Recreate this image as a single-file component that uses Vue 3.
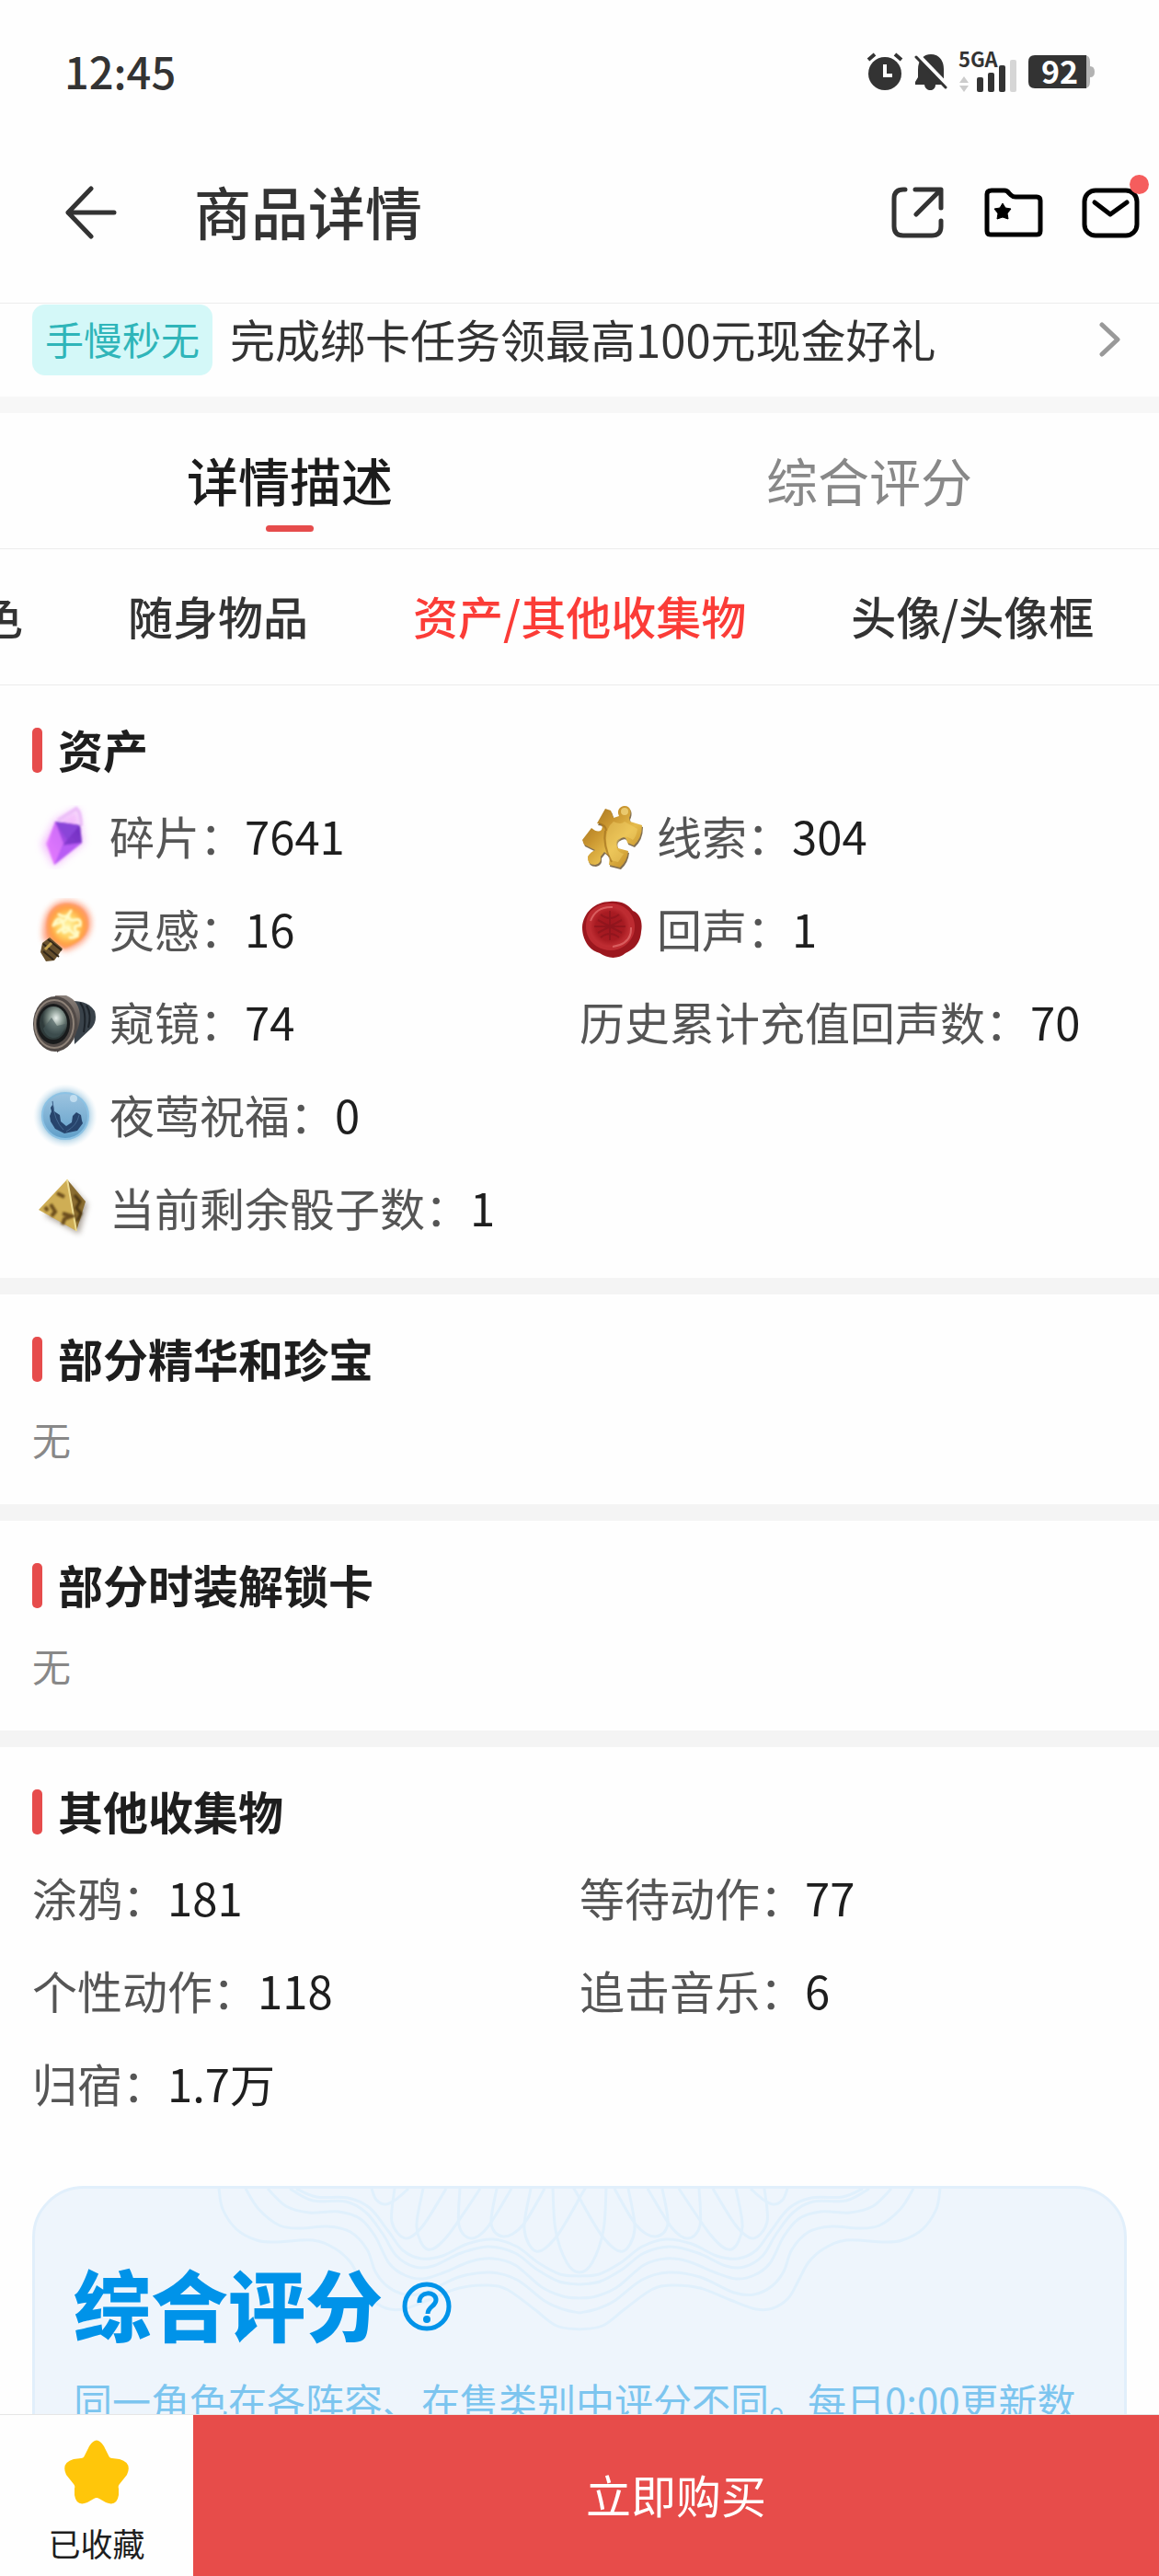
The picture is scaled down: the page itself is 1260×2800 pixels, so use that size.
<script setup>
const categories = [
  { label: '色', active: false },
  { label: '随身物品', active: false },
  { label: '资产/其他收集物', active: true },
  { label: '头像/头像框', active: false },
]

const assets = [
  { icon: 'shard', label: '碎片', value: '7641' },
  { icon: 'puzzle', label: '线索', value: '304' },
  { icon: 'bulb', label: '灵感', value: '16' },
  { icon: 'seal', label: '回声', value: '1' },
  { icon: 'lens', label: '窥镜', value: '74' },
  { icon: '', label: '历史累计充值回声数', value: '70' },
  { icon: 'orb', label: '夜莺祝福', value: '0', wide: true },
  { icon: 'dice', label: '当前剩余骰子数', value: '1', wide: true },
]

const collection = [
  { label: '涂鸦', value: '181' },
  { label: '等待动作', value: '77' },
  { label: '个性动作', value: '118' },
  { label: '追击音乐', value: '6' },
  { label: '归宿', value: '1.7万' },
]

// Left half of the guilloche ornament; the right half is its mirror.
const waves = [
  [[202, 0], [206, 22], [221, 44], [243, 56], [263, 58], [304, 56], [328, 65], [345, 80], [356, 100], [367, 119], [384, 130], [402, 131], [430, 121], [463, 108], [495, 105], [516, 110], [545, 131], [569, 149], [594, 153]],
  [[231, 0], [245, 22], [268, 40], [291, 43], [320, 41], [345, 47], [363, 66], [372, 90], [385, 106], [404, 115], [426, 113], [463, 96], [497, 91], [526, 99], [556, 122], [576, 131], [594, 135]],
  [[255, 0], [275, 19], [300, 26], [332, 25], [356, 33], [372, 52], [387, 81], [404, 94], [424, 98], [447, 91], [476, 79], [500, 76], [524, 83], [553, 107], [576, 117], [594, 119]],
  [[279, 0], [304, 13], [340, 14], [362, 26], [380, 49], [395, 73], [415, 85], [435, 84], [465, 70], [495, 63], [524, 70], [548, 88], [572, 101], [594, 104]],
  [[286, 0], [308, 9], [342, 10], [366, 21], [386, 46], [402, 67], [422, 76], [445, 73], [472, 60], [500, 55], [526, 63], [550, 81], [573, 93], [594, 95]],
]
const petals = [
  [[368, 0], [373, 12], [383, 17], [394, 12], [408, 0]],
  [[393, 0], [390, 36], [405, 54], [424, 40], [449, 0]],
  [[424, 0], [417, 42], [429, 66], [450, 52], [486, 0]],
  [[464, 0], [463, 40], [476, 54], [494, 42], [520, 0]],
  [[504, 0], [498, 38], [511, 52], [532, 40], [556, 0]],
  [[541, 0], [534, 44], [547, 68], [569, 52], [597, 5], [600, 0]],
  [[562, 0], [565, 40], [578, 76], [590, 89], [602, 84], [614, 60], [621, 0]],
]

function smooth(points) {
  let d = `M${points[0][0]} ${points[0][1]}`
  for (let i = 0; i < points.length - 1; i++) {
    const a = points[Math.max(i - 1, 0)]
    const b = points[i]
    const c = points[i + 1]
    const e = points[Math.min(i + 2, points.length - 1)]
    d += `C${b[0] + (c[0] - a[0]) / 6} ${b[1] + (c[1] - a[1]) / 6} ${c[0] - (e[0] - b[0]) / 6} ${c[1] - (e[1] - b[1]) / 6} ${c[0]} ${c[1]}`
  }
  return d
}
const wavePaths = waves.map(smooth)
const petalPaths = petals.slice(0, -1).map(smooth)
const centerPetal = smooth([[565, 0], [568, 45], [580, 80], [594, 91], [608, 80], [620, 45], [623, 0]])
</script>

<template>
  <div class="page" lang="zh-CN">
    <div class="status">
      <span class="clock">12:45</span>
      <div class="status-icons">
        <svg width="40" height="42" viewBox="0 0 40 42">
          <circle cx="20" cy="23" r="18" fill="#333" />
          <path d="M2 8l7-6M31 2l7 6" stroke="#333" stroke-width="4" fill="none" />
          <path d="M20 13v12h8" stroke="#fff" stroke-width="4" fill="none" />
        </svg>
        <svg width="36" height="42" viewBox="0 0 36 42">
          <path d="M4 19C4 8 10 2 18 2s14 6 14 16v11l3 6H23c0 8-11 8-12 0H1v-3l3-5z" fill="#333" />
          <path d="M3 2l33 34" stroke="#fefefe" stroke-width="5" />
          <path d="M2 5l32 33" stroke="#333" stroke-width="3" stroke-linecap="round" />
        </svg>
        <div class="signal">
          <svg width="64" height="44" viewBox="0 0 64 44">
            <path d="M1 34l5-7 5 7zM1 37h10l-5 7z" fill="#ccc" />
            <rect x="20" y="28" width="7" height="16" rx="2" fill="#333" />
            <rect x="32" y="23" width="7" height="21" rx="2" fill="#333" />
            <rect x="44" y="15" width="7" height="29" rx="2" fill="#333" />
            <rect x="56" y="9" width="7" height="35" rx="2" fill="#d6d6d6" />
          </svg>
          <span class="network">5GA</span>
        </div>
        <div class="battery">
          <svg width="72" height="36" viewBox="0 0 72 36">
            <path d="M58 0h3q6 0 6 7v5q5 0 5 6t-5 6v5q0 7-6 7h-3z" fill="#b3b3b3" />
            <path d="M7 0h56v36H7q-7 0-7-7V7q0-7 7-7z" fill="#333" />
          </svg>
          <span class="charge">92</span>
        </div>
      </div>
    </div>

    <header class="appbar">
      <button class="icon-btn back" aria-label="返回">
        <svg width="58" height="60" viewBox="0 0 58 60" fill="none" stroke="#333" stroke-width="5" stroke-linecap="round" stroke-linejoin="round">
          <path d="M54 30H4M29 4L4 30l25 26" />
        </svg>
      </button>
      <h1>商品详情</h1>
      <div class="actions">
        <button class="icon-btn" aria-label="分享">
          <svg width="64" height="58" viewBox="0 0 64 58" fill="none" stroke="#333" stroke-width="5" stroke-linecap="round" stroke-linejoin="round">
            <path d="M19 4h-2Q7 4 7 14v30q0 10 10 10h31q10 0 10-10v-6" />
            <path d="M30 4h28v20M57 5L31 31" />
          </svg>
        </button>
        <button class="icon-btn" aria-label="收藏夹">
          <svg width="64" height="58" viewBox="0 0 64 58">
            <path d="M8 5h14q3 0 5 3l2 2q2 2 5 2h23q4 0 4 4v33q0 4-4 4H7q-4 0-4-4V9q0-4 5-4z" fill="none" stroke="#000" stroke-width="5" stroke-linejoin="round" />
            <path d="M20 19l3 5 6 1-4 5 1 6-6-2-6 2 1-6-4-5 6-1z" fill="#000" stroke="#000" stroke-width="1" stroke-linejoin="round" />
          </svg>
        </button>
        <button class="icon-btn" aria-label="消息">
          <svg width="64" height="58" viewBox="0 0 64 58" fill="none" stroke="#000" stroke-width="5" stroke-linecap="round" stroke-linejoin="round">
            <rect x="4" y="5" width="57" height="49" rx="12" />
            <path d="M15 18l17 13 18-13" />
          </svg>
          <span class="dot"></span>
        </button>
      </div>
    </header>

    <main class="content">
      <a class="promo" href="#">
        <span class="badge">手慢秒无</span>
        <span class="promo-text">完成绑卡任务领最高100元现金好礼</span>
        <svg width="24" height="40" viewBox="0 0 24 40" fill="none" stroke="#999" stroke-width="5" stroke-linecap="round" stroke-linejoin="round">
          <path d="M3 3l17 16L3 35" />
        </svg>
      </a>

      <div class="tabs">
        <button class="tab current">详情描述</button>
        <button class="tab">综合评分</button>
      </div>

      <nav class="categories">
        <a v-for="c in categories" :key="c.label" href="#" :class="{ active: c.active }">{{ c.label }}</a>
      </nav>

      <section>
        <h2>资产</h2>
        <ul class="grid">
          <li v-for="a in assets" :key="a.label" :class="{ wide: a.wide }">
            <svg v-if="a.icon" class="item-icon" width="70" height="70" viewBox="0 0 70 70">
              <g v-if="a.icon === 'shard'">
                <defs>
                  <linearGradient id="shard" x1="0" y1="1" x2="1" y2="0">
                    <stop offset="0" stop-color="#f07cff" />
                    <stop offset=".5" stop-color="#a44ce6" />
                    <stop offset="1" stop-color="#6a2cc0" />
                  </linearGradient>
                  <filter id="glow" x="-40%" y="-40%" width="180%" height="180%"><feGaussianBlur stdDeviation="4" /></filter>
                  <filter id="soft"><feGaussianBlur stdDeviation="1" /></filter>
                </defs>
                <path d="M25 16L50 3l6 38-32 26-14-24z" fill="#f0a8fb" opacity=".75" filter="url(#glow)" />
                <g filter="url(#soft)">
                  <path d="M28 17L48 4q5 4 5 19" fill="none" stroke="#ecc0f8" stroke-width="4" />
                  <path d="M25 18l27 4 2 19-30 24-7-22z" fill="url(#shard)" />
                  <path d="M25 18l27 4-14 16z" fill="#8a45d8" />
                  <path d="M52 22L38 38l-5 6 21-3z" fill="#7131bf" opacity=".6" />
                  <path d="M25 18l9 24-10 23-9-23z" fill="#e27bff" opacity=".75" />
                  <path d="M54 41L33 44l-9 21z" fill="#b85cf5" />
                </g>
              </g>
              <g v-else-if="a.icon === 'puzzle'">
                <defs>
                  <linearGradient id="gold" x1="0" y1="0" x2="1" y2="1">
                    <stop offset="0" stop-color="#94661c" />
                    <stop offset=".35" stop-color="#c8942f" />
                    <stop offset=".6" stop-color="#e6bc4c" />
                    <stop offset="1" stop-color="#b57c1b" />
                  </linearGradient>
                </defs>
                <path d="M19 20L28 4l6 2 3 8 6-2C40 6 44 1 49 1c7 0 8 7 5 13l1 4 13 4q0 14-9 22l-7-3q-1-8-7-5-8 3-3 11l11 3q-1 11-9 18l-12-3 1-9-6-5-4 5q1 8-6 9-9 0-8-9 3-5 8-7L5 43l-2-5 10-13q7 6 11 2 3-7-5-7z" fill="#4d3209" opacity=".7" transform="translate(1 2)" />
                <path d="M19 20L28 4l6 2 3 8 6-2C40 6 44 1 49 1c7 0 8 7 5 13l1 4 13 4q0 14-9 22l-7-3q-1-8-7-5-8 3-3 11l11 3q-1 11-9 18l-12-3 1-9-6-5-4 5q1 8-6 9-9 0-8-9 3-5 8-7L5 43l-2-5 10-13q7 6 11 2 3-7-5-7z" fill="url(#gold)" />
                <path d="M37 18q8 4 12 0l14 8q-1 8-5 12-10-8-16 2-5 10 6 13l-6 9-8-2q-4-12-5-22 0-14 8-20z" fill="#f3d36b" opacity=".45" />
                <path d="M28 28q-3 16 7 34M21 20q8 2 8 8" fill="none" stroke="#9b6a1c" stroke-width="2" opacity=".6" />
                <circle cx="49" cy="7" r="4" fill="#f5dc86" opacity=".7" />
              </g>
              <g v-else-if="a.icon === 'bulb'">
                <defs>
                  <radialGradient id="bulb">
                    <stop offset="0" stop-color="#fff7a8" />
                    <stop offset=".5" stop-color="#ffd061" />
                    <stop offset=".8" stop-color="#ffa246" />
                    <stop offset="1" stop-color="#ff9c66" />
                  </radialGradient>
                  <filter id="halo" x="-30%" y="-30%" width="160%" height="160%"><feGaussianBlur stdDeviation="3" /></filter>
                  <filter id="haze"><feGaussianBlur stdDeviation="1" /></filter>
                </defs>
                <path d="M38 3c18 0 28 13 26 28S49 54 36 58L12 46C9 22 18 3 38 3z" fill="#ff8f68" opacity=".8" filter="url(#halo)" />
                <path d="M38 6c15 0 24 11 23 24S48 50 35 55L17 43C12 22 20 6 38 6z" fill="url(#bulb)" filter="url(#haze)" />
                <path d="M23 30q4-10 9-6t8-8q-2 10 6 8t6 6q-9-1-4 8t-8-4q-8 8-6-2t-11-2M29 18q9 6 13-4M41 43q8 1 9-6M28 37q5-5 12-5" fill="none" stroke="#fffbc6" stroke-width="3" stroke-linecap="round" filter="url(#haze)" />
                <path d="M11 49l8-6 14 12-4 6-5 7-9 1-6-10z" fill="#67502d" />
                <path d="M12 50l17 14M17 45l15 12M12 58l11 9" stroke="#322719" stroke-width="2" />
                <path d="M14 56l7-7" stroke="#c2a04d" stroke-width="3" />
              </g>
              <g v-else-if="a.icon === 'seal'">
                <defs>
                  <radialGradient id="wax">
                    <stop offset="0" stop-color="#a0161f" />
                    <stop offset=".7" stop-color="#a81b22" />
                    <stop offset="1" stop-color="#c02e33" />
                  </radialGradient>
                </defs>
                <path d="M33 4c12-1 20 3 25 10 8 3 11 12 9 23-1 14-10 20-17 23-8 7-20 6-28 0C10 57 3 45 3 32 4 16 17 4 33 4z" fill="#9b171e" />
                <path d="M32 6c15-1 27 9 28 24S48 57 34 57 7 47 7 31 17 7 32 6z" fill="#bd2b31" />
                <circle cx="33" cy="31" r="22" fill="url(#wax)" />
                <path d="M12 25Q18 9 36 10M56 32q1 18-20 21" fill="none" stroke="#e06a6a" stroke-width="2" opacity=".8" />
                <path d="M33 14v32M20 24l26 14M20 38l26-14M23 18q10 8 20 0M23 43q10-8 20 0M16 31h34" fill="none" stroke="#7d1119" stroke-width="2" opacity=".5" />
              </g>
              <g v-else-if="a.icon === 'lens'">
                <defs>
                  <radialGradient id="glass" cx=".6" cy=".35">
                    <stop offset="0" stop-color="#e8f0ec" />
                    <stop offset=".5" stop-color="#86968f" />
                    <stop offset="1" stop-color="#2f3b3b" />
                  </radialGradient>
                  <linearGradient id="tube" x1="0" y1="0" x2="0" y2="1">
                    <stop offset="0" stop-color="#8a807a" />
                    <stop offset="1" stop-color="#2e2a29" />
                  </linearGradient>
                </defs>
                <path d="M44 11q17 0 24 11 3 10-3 18L46 58z" fill="#39424a" />
                <path d="M52 13q8 9 4 32M59 16q6 9 2 24" fill="none" stroke="#1d2329" stroke-width="2" />
                <path d="M25 5h12q15 6 15 24-1 19-17 32l-8 6z" fill="url(#tube)" />
                <ellipse cx="25" cy="36" rx="24" ry="30" fill="#514a47" />
                <ellipse cx="24" cy="36" rx="21" ry="26" fill="none" stroke="#8e8278" stroke-width="2" />
                <ellipse cx="23" cy="36" rx="18" ry="22" fill="#191b1c" />
                <ellipse cx="23" cy="35" rx="15" ry="18" fill="url(#glass)" />
                <path d="M12 41l9-12 6 9 9-2q-3 16-14 15-7-1-10-10z" fill="#46595a" opacity=".6" />
              </g>
              <g v-else-if="a.icon === 'orb'">
                <defs>
                  <radialGradient id="aura">
                    <stop offset=".6" stop-color="#72add0" />
                    <stop offset="1" stop-color="#cfe6f2" stop-opacity="0" />
                  </radialGradient>
                  <linearGradient id="sky" x1="0" y1="0" x2="0" y2="1">
                    <stop offset="0" stop-color="#9dc4e0" />
                    <stop offset="1" stop-color="#609fc9" />
                  </linearGradient>
                </defs>
                <circle cx="36" cy="35" r="35" fill="url(#aura)" />
                <circle cx="36" cy="35" r="25" fill="url(#sky)" stroke="#8cc2e4" stroke-width="2" />
                <path d="M22 18l2 12 6 4 1 7 6 5 6-4 1-7 4-4 5 3 1 6 1 3-6 8-14 3-10-5-5-8-1-6 2-5-1-4 2-3z" fill="#27446c" />
                <path d="M22 19q2 22 12 31M51 34q-2 11-14 18" fill="none" stroke="#456890" stroke-width="1" />
                <circle cx="45" cy="16" r="4" fill="#d4eaf7" opacity=".7" />
              </g>
              <g v-else>
                <defs>
                  <filter id="shade" x="-30%" y="-30%" width="160%" height="160%"><feGaussianBlur stdDeviation="3" /></filter>
                  <filter id="blot"><feGaussianBlur stdDeviation="1" /></filter>
                </defs>
                <path d="M40 8l20 22-9 32L14 42z" fill="#85786c" opacity=".7" filter="url(#shade)" />
                <path d="M38 3L7 36l41 23z" fill="#cfae55" />
                <path d="M38 3l20 24-10 32z" fill="#8a6d31" />
                <path d="M38 3l10 56" stroke="#eedc91" stroke-width="2" />
                <g fill="none" filter="url(#blot)">
                  <path d="M27 18l8 4M20 30l5 8-4 5M33 40l10 3-8 3-2 6M14 33l3 4" stroke="#6c4d1b" stroke-width="4" />
                  <path d="M46 20l6 7-4 7 5 6-4 8" stroke="#46330f" stroke-width="3" />
                </g>
              </g>
            </svg>
            <span class="label">{{ a.label }}：</span><span class="value">{{ a.value }}</span>
          </li>
        </ul>
      </section>

      <section>
        <h2>部分精华和珍宝</h2>
        <p class="empty">无</p>
      </section>

      <section>
        <h2>部分时装解锁卡</h2>
        <p class="empty">无</p>
      </section>

      <section>
        <h2>其他收集物</h2>
        <ul class="grid">
          <li v-for="c in collection" :key="c.label">
            <span class="label">{{ c.label }}：</span><span class="value">{{ c.value }}</span>
          </li>
        </ul>
      </section>

      <article class="score">
        <svg class="ornament" width="1188" height="170" viewBox="0 0 1188 170" fill="none" stroke="#e0f0fc" stroke-width="3">
          <path v-for="(d, i) in wavePaths" :key="'w' + i" :d="d" />
          <path v-for="(d, i) in petalPaths" :key="'p' + i" :d="d" />
          <g transform="translate(1188 0) scale(-1 1)">
            <path v-for="(d, i) in wavePaths" :key="'w' + i" :d="d" />
            <path v-for="(d, i) in petalPaths" :key="'p' + i" :d="d" />
          </g>
          <path :d="centerPetal" />
        </svg>
        <div class="score-head">
          <h3>综合评分</h3>
          <button class="icon-btn help" aria-label="评分说明">
            <svg width="56" height="56" viewBox="0 0 56 56" fill="none" stroke="#0093e9" stroke-width="5">
              <circle cx="28" cy="28" r="24" />
              <path d="M20 24c-1-13 18-13 18-3 0 7-9 7-9 15" />
              <circle cx="28" cy="42" r="4" fill="#0093e9" stroke="none" />
            </svg>
          </button>
        </div>
        <p>同一角色在各阵容、在售类别中评分不同。每日0:00更新数</p>
      </article>
    </main>

    <footer class="bottom">
      <button class="favorite">
        <svg width="72" height="70" viewBox="0 0 72 70">
          <path d="M28 7q8-13 16 0l5 10q1 3 4 3l8 1q14 4 8 17l-8 10q-2 2-1 5v7q-2 13-14 8l-7-4q-3-2-6 0l-7 4q-12 5-14-8v-7q1-3-1-5L3 38q-6-13 8-17l8-1q3 0 4-3z" fill="#ffc60a" />
        </svg>
        <span>已收藏</span>
      </button>
      <button class="buy">立即购买</button>
    </footer>
  </div>
</template>

<style>
body {
  margin: 0;
  background: #fefefe;
}
</style>

<style scoped>
.page {
  display: flex;
  flex-direction: column;
  height: 100vh;
  overflow: hidden;
  font-family: "Noto Sans CJK SC", sans-serif;
  font-size: 49px;
  color: #333;
}
h1, h2, h3, p, ul {
  margin: 0;
  padding: 0;
}
ul {
  list-style: none;
}
svg {
  display: block;
  flex: none;
}
button {
  padding: 0;
  border: 0;
  background: none;
  font: inherit;
  color: inherit;
}
a {
  color: inherit;
  text-decoration: none;
}
.status {
  flex: none;
  display: flex;
  align-items: center;
  justify-content: space-between;
  height: 156px;
  padding: 0 70px;
}
.clock {
  padding-bottom: 4px;
  font-size: 47px;
  font-weight: 500;
}
.status-icons {
  display: flex;
  align-items: center;
  gap: 12px;
}
.signal,
.battery {
  position: relative;
}
.network {
  position: absolute;
  top: -9px;
  left: 0;
  font-size: 22px;
  line-height: 32px;
  font-weight: 700;
}
.charge {
  position: absolute;
  inset: 0 4px 0 0;
  font-size: 34px;
  line-height: 34px;
  font-weight: 700;
  text-align: center;
  color: #fff;
}
.appbar {
  flex: none;
  display: flex;
  align-items: center;
  height: 150px;
  padding: 0 21px 23px 70px;
  border-bottom: 1px solid #ececec;
}
.icon-btn {
  position: relative;
  display: block;
}
.appbar h1 {
  flex: 1;
  margin-left: 83px;
  padding-bottom: 4px;
  font-size: 62px;
  line-height: 90px;
  font-weight: 500;
}
.actions {
  display: flex;
  gap: 41px;
}
.dot {
  position: absolute;
  top: -12px;
  right: -10px;
  width: 21px;
  height: 21px;
  border-radius: 50%;
  background: #f55d5d;
}
.content {
  flex: 1;
  min-height: 0;
  overflow: hidden;
}
.promo {
  display: flex;
  align-items: center;
  padding: 1px 41px 23px 35px;
  border-bottom: 18px solid #f7f7f7;
}
.badge {
  padding: 0 14px 4px;
  border-radius: 14px;
  background: #d4f8f8;
  color: #2fb5b9;
  font-size: 42px;
  line-height: 73px;
}
.promo-text {
  flex: 1;
  margin-left: 19px;
  padding-bottom: 4px;
  line-height: 73px;
}
.tabs {
  display: flex;
  border-bottom: 1px solid #ececec;
}
.tab {
  position: relative;
  flex: 1;
  padding-bottom: 4px;
  font-size: 56px;
  line-height: 143px;
  color: #888;
}
.tab.current {
  font-weight: 500;
  color: #1c1c1c;
}
.tab.current::after {
  content: "";
  position: absolute;
  bottom: 18px;
  left: calc(50% - 26px);
  width: 52px;
  height: 7px;
  border-radius: 4px;
  background: #e64c4c;
}
.categories {
  display: flex;
  gap: 114px;
  margin-left: -24px;
  padding-bottom: 4px;
  line-height: 143px;
  font-weight: 500;
  white-space: nowrap;
  border-bottom: 1px solid #ececec;
}
.categories .active {
  color: #fb3c37;
}
section {
  padding: 46px 35px 25px;
}
section + section {
  border-top: 18px solid #f4f4f4;
}
h2 {
  display: flex;
  gap: 17px;
  height: 49px;
  margin-bottom: 19px;
  font-size: 49px;
  line-height: 45px;
  font-weight: 700;
  color: #1e1e1e;
}
h2::before {
  content: "";
  width: 11px;
  border-radius: 5px;
  background: #e64c4c;
}
.grid {
  display: grid;
  grid-template-columns: 1fr 1fr;
}
.grid li {
  display: flex;
  align-items: center;
  height: 101px;
  white-space: nowrap;
}
.grid .wide {
  grid-column: 1 / -1;
}
.item-icon {
  margin-right: 14px;
}
.label,
.value {
  padding-bottom: 4px;
}
.label {
  color: #555;
}
.value {
  color: #1e1e1e;
}
.empty {
  padding-bottom: 4px;
  font-size: 42px;
  line-height: 85px;
  color: #888;
}
.score {
  position: relative;
  height: 600px;
  margin: 35px 35px 0;
  padding: 74px 42px 0;
  box-sizing: border-box;
  border: 3px solid #e1effb;
  border-radius: 56px;
  background: #eef5fc;
}
.ornament {
  position: absolute;
  top: 0;
  left: calc(50% - 594px);
}
.score-head {
  position: relative;
  display: flex;
  align-items: center;
  gap: 20px;
}
.help {
  padding-top: 8px;
}
.score h3 {
  font-size: 84px;
  line-height: 100px;
  font-weight: 900;
  color: #0093e9;
}
.score p {
  margin-top: 26px;
  font-size: 42px;
  line-height: 60px;
  white-space: nowrap;
  color: #7cc5ef;
}
.bottom {
  flex: none;
  display: flex;
  height: 175px;
  border-top: 1px solid #e6e6e6;
}
.favorite {
  display: flex;
  flex-direction: column;
  align-items: center;
  width: 210px;
  padding-top: 27px;
  color: #1e1e1e;
  font-size: 35px;
  line-height: 50px;
  gap: 17px;
}
.buy {
  flex: 1;
  padding-bottom: 4px;
  background: #e74c4a;
  color: #fff;
}
</style>
